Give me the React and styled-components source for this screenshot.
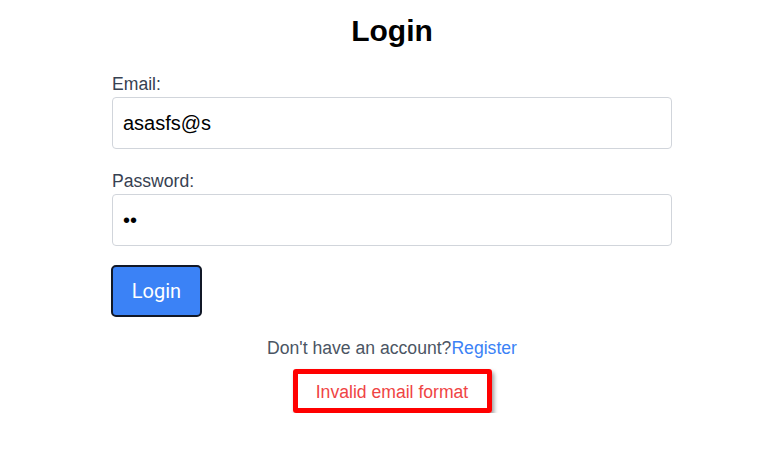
import React from 'react'
import styled, { createGlobalStyle } from 'styled-components'

const GlobalStyle = createGlobalStyle`
  body {
    margin: 0;
    background: #fff;
    font-family: "Liberation Sans", Arial, sans-serif;
  }
`

const Page = styled.div`
  padding: 13px 0 0 16px;
`

const Container = styled.div`
  max-width: 560px;
  margin: 0 auto;
`

const Title = styled.h2`
  margin: 0 0 22px;
  font-size: 30px;
  line-height: 36px;
  font-weight: 700;
  text-align: center;
  color: #000;
`

const Form = styled.form`
  display: flex;
  flex-direction: column;
`

const Field = styled.div`
  margin-bottom: 19px;
`

const Label = styled.label`
  display: block;
  font-size: 17.6px;
  line-height: 26px;
  color: #374151;
`

const Input = styled.input`
  box-sizing: border-box;
  width: 100%;
  height: 52px;
  padding: 0 10px;
  border: 1px solid #d1d5db;
  border-radius: 4px;
  font-family: "Liberation Sans", Arial, sans-serif;
  font-size: 20px;
  color: #000;
  outline: none;
`

const Button = styled.button`
  align-self: flex-start;
  box-sizing: border-box;
  margin: 0 0 0 -1px;
  width: 91px;
  height: 52px;
  background: #3b82f6;
  color: #fff;
  border: 2px solid #111827;
  border-radius: 5px;
  font-family: Roboto, "Liberation Sans", Arial, sans-serif;
  font-size: 20px;
  cursor: pointer;
`

const Footer = styled.p`
  margin: 18px 0 0;
  text-align: center;
  font-size: 17.6px;
  line-height: 26px;
  color: #4b5563;

  a {
    color: #3b82f6;
    text-decoration: none;
  }
`

const ErrorBox = styled.div`
  display: flex;
  justify-content: center;
  margin-top: 8px;
`

const ErrorText = styled.p`
  box-sizing: border-box;
  margin: 0;
  width: 199px;
  height: 44px;
  padding-top: 2px;
  display: flex;
  align-items: center;
  justify-content: center;
  border: 5px solid #ff0000;
  border-radius: 3px;
  box-shadow: 2px 3px 4px rgba(0, 0, 0, 0.4);
  font-size: 17.6px;
  color: #ef4444;
`

const App = () => {
  return (
    <Page>
      <GlobalStyle />
      <Container>
        <Title>Login</Title>
        <Form onSubmit={e => e.preventDefault()}>
          <Field>
            <Label htmlFor="email">Email:</Label>
            <Input id="email" type="text" defaultValue="asasfs@s" />
          </Field>
          <Field>
            <Label htmlFor="password">Password:</Label>
            <Input id="password" type="password" defaultValue="ab" />
          </Field>
          <Button type="submit">Login</Button>
        </Form>
        <Footer>
          Don't have an account?<a href="#register">Register</a>
        </Footer>
        <ErrorBox>
          <ErrorText>Invalid email format</ErrorText>
        </ErrorBox>
      </Container>
    </Page>
  )
}

export default App
